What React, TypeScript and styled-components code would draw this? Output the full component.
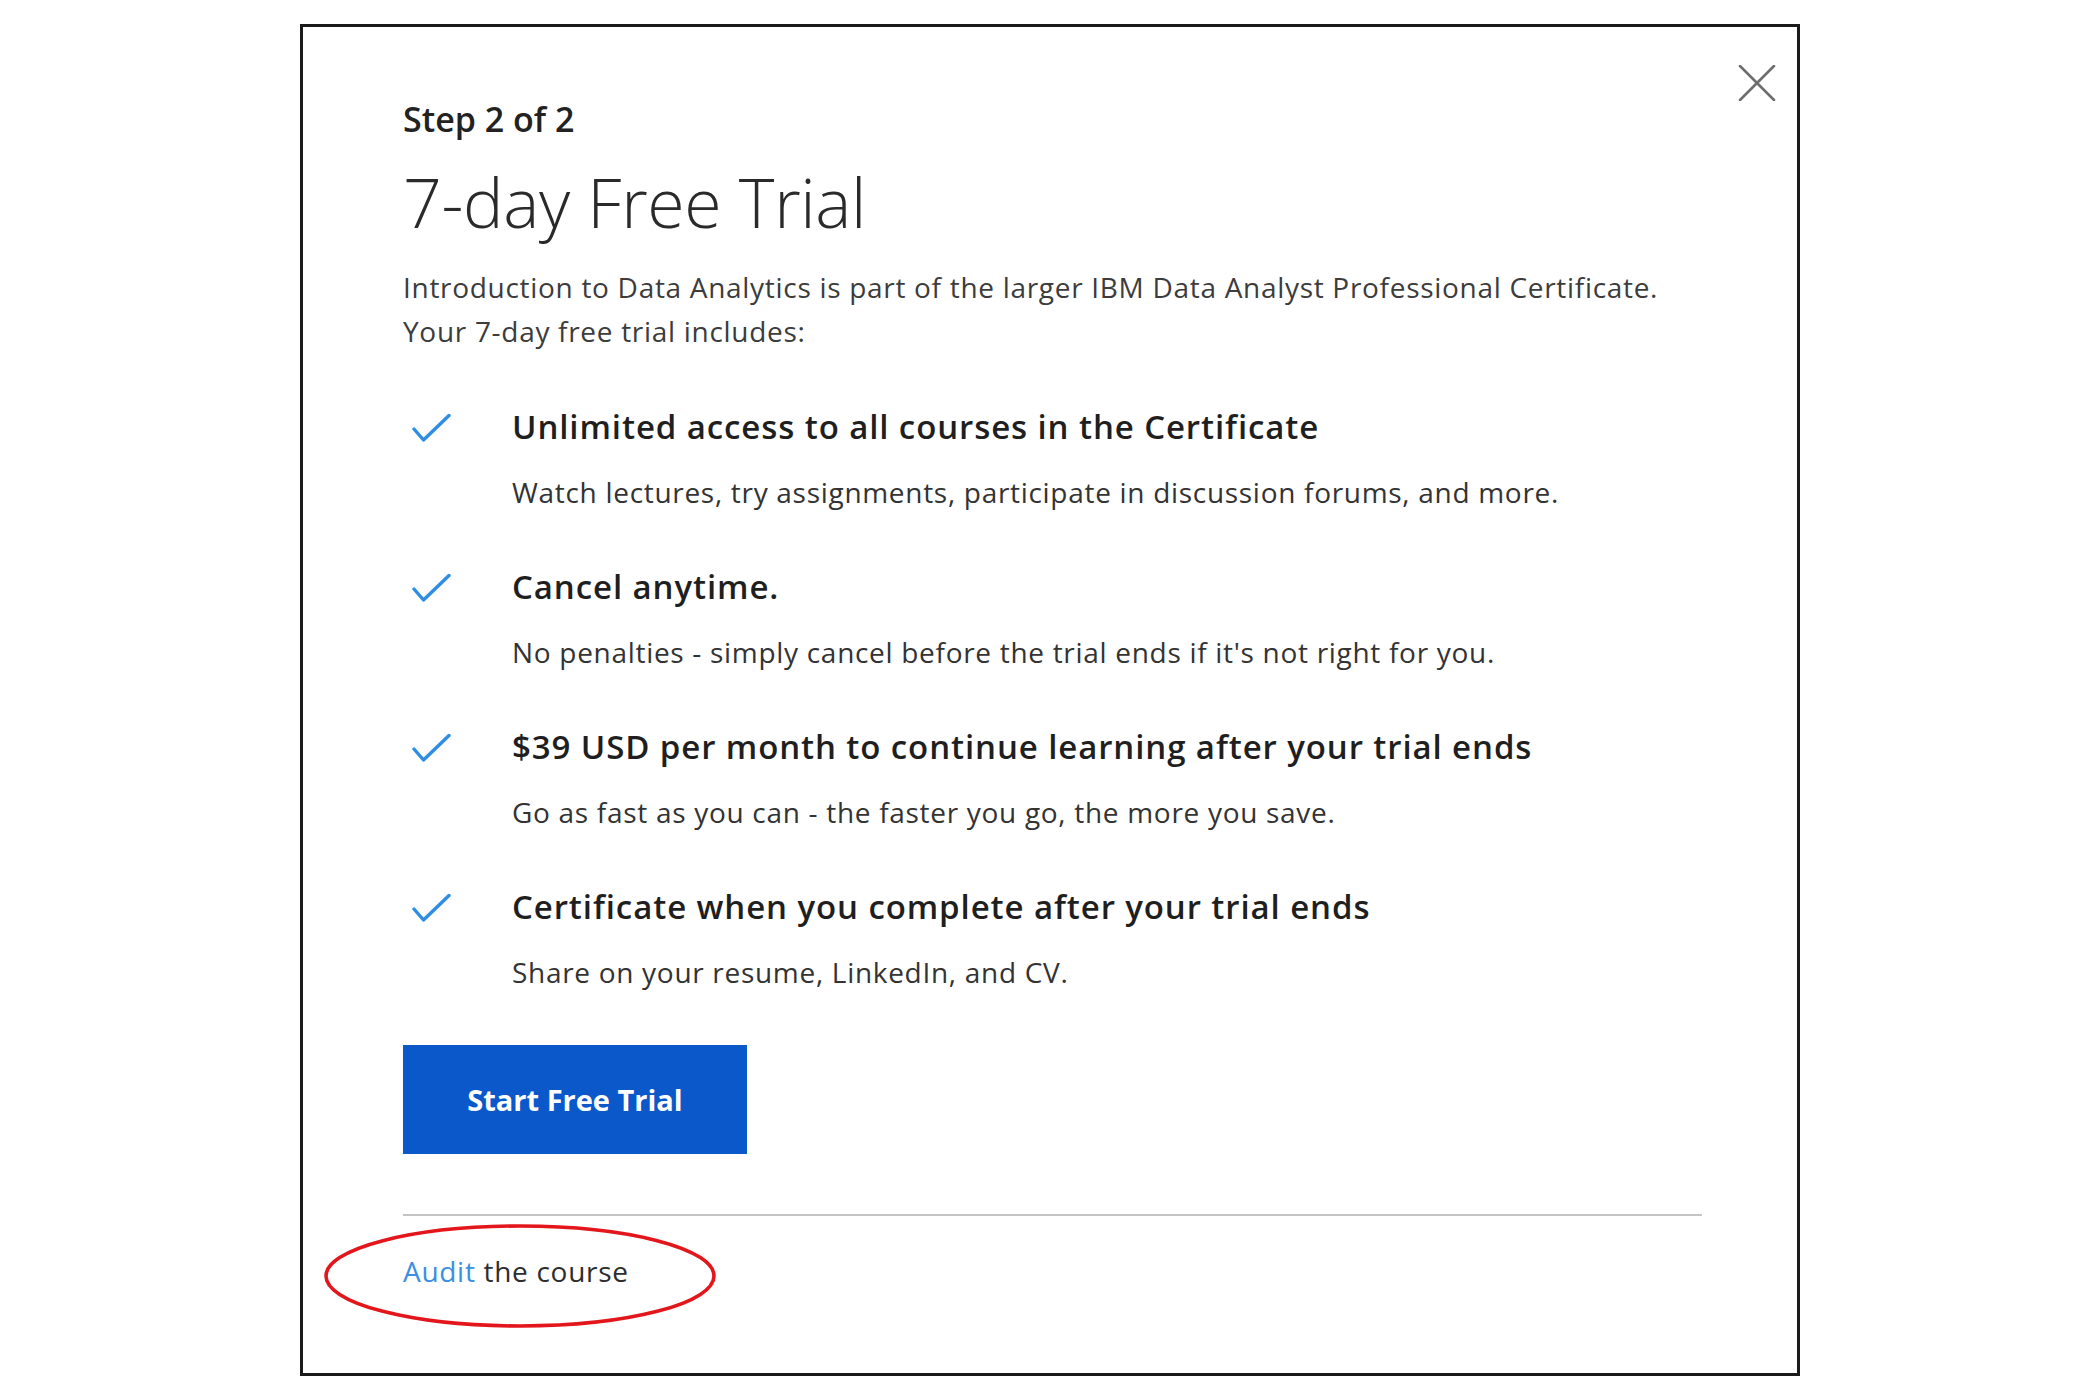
import styled, { createGlobalStyle } from "styled-components";

const GlobalStyle = createGlobalStyle`
	html, body {
		margin: 0;
		padding: 0;
		background: #ffffff;
	}
	body {
		font-family: "Open Sans", "Liberation Sans", sans-serif;
		color: #1f1f1f;
	}
	* {
		box-sizing: border-box;
	}
`;

const features = [
	{
		title: "Unlimited access to all courses in the Certificate",
		text: "Watch lectures, try assignments, participate in discussion forums, and more.",
	},
	{
		title: "Cancel anytime.",
		text: "No penalties - simply cancel before the trial ends if it's not right for you.",
	},
	{
		title: "$39 USD per month to continue learning after your trial ends",
		text: "Go as fast as you can - the faster you go, the more you save.",
	},
	{
		title: "Certificate when you complete after your trial ends",
		text: "Share on your resume, LinkedIn, and CV.",
	},
];

function CheckIcon() {
	return (
		<CheckSvg viewBox="0 0 40 30" width="40" height="30">
			<path d="M3 16 L12.5 27 L38 2.5" fill="none" stroke="#2f8de6" strokeWidth="3.4" strokeLinecap="round" strokeLinejoin="round" />
		</CheckSvg>
	);
}

export default function App() {
	return (
		<>
			<GlobalStyle />
			<Page>
				<Modal>
					<CloseButton aria-label="Close">
						<svg viewBox="0 0 38 36" width="38" height="36">
							<path d="M2 1 L36 35 M36 1 L2 35" stroke="#6e6e6e" strokeWidth="2.6" strokeLinecap="round" />
						</svg>
					</CloseButton>
					<Step>Step 2 of 2</Step>
					<Title>7-day Free Trial</Title>
					<Intro>
						Introduction to Data Analytics is part of the larger IBM Data Analyst Professional Certificate.
						<br />
						Your 7-day free trial includes:
					</Intro>
					<FeatureList>
						{features.map((f) => (
							<Feature key={f.title}>
								<IconCell>
									<CheckIcon />
								</IconCell>
								<div>
									<FeatureTitle>{f.title}</FeatureTitle>
									<FeatureText>{f.text}</FeatureText>
								</div>
							</Feature>
						))}
					</FeatureList>
					<StartButton>Start Free Trial</StartButton>
					<Divider />
					<AuditRow>
						<AuditLink href="###">Audit</AuditLink> the course
						<Circle viewBox="0 0 394 106" width="394" height="106">
							<ellipse cx="197" cy="53" rx="194" ry="50" fill="none" stroke="#e3161b" strokeWidth="3.6" />
						</Circle>
					</AuditRow>
				</Modal>
			</Page>
		</>
	);
}

const Page = styled.div`
	width: 2100px;
	height: 1400px;
	display: flex;
	justify-content: center;
	align-items: flex-start;
	padding-top: 24px;
`;

const Modal = styled.section`
	position: relative;
	width: 1500px;
	height: 1352px;
	border: 3px solid #1b1b1b;
	background: #ffffff;
	padding: 0 98px 0 100px;
	display: flex;
	flex-direction: column;
	align-items: flex-start;
`;

const CloseButton = styled.button`
	position: absolute;
	top: 38px;
	right: 21px;
	border: none;
	background: transparent;
	padding: 0;
	display: flex;
	cursor: pointer;
`;

const Step = styled.div`
	margin-top: 70px;
	font-size: 34px;
	line-height: 44px;
	font-weight: 600;
	color: #222;
`;

const Title = styled.h1`
	margin: 21px 0 0;
	font-size: 68px;
	line-height: 80px;
	font-weight: 300;
	color: #2a2a2a;
	letter-spacing: -0.3px;
`;

const Intro = styled.p`
	margin: 23px 0 0;
	font-size: 28px;
	line-height: 44px;
	font-weight: 400;
	letter-spacing: 0.7px;
	color: #3c3c3c;
`;

const FeatureList = styled.ul`
	list-style: none;
	margin: 54px 0 0;
	padding: 0;
	display: flex;
	flex-direction: column;
	gap: 55px;
`;

const Feature = styled.li`
	display: flex;
	align-items: flex-start;
`;

const IconCell = styled.div`
	width: 109px;
	flex: none;
	padding: 6px 0 0 8px;
`;

const CheckSvg = styled.svg`
	display: block;
`;

const FeatureTitle = styled.div`
	font-size: 33px;
	line-height: 40px;
	font-weight: 600;
	letter-spacing: 0.9px;
	color: #1f1f1f;
`;

const FeatureText = styled.div`
	margin-top: 25px;
	font-size: 28px;
	line-height: 40px;
	font-weight: 400;
	letter-spacing: 0.7px;
	color: #333;
`;

const StartButton = styled.button`
	margin-top: 53px;
	width: 344px;
	height: 109px;
	border: none;
	background: #0a58ca;
	color: #ffffff;
	font-family: "Open Sans", "Liberation Sans", sans-serif;
	font-size: 29px;
	font-weight: 700;
	cursor: pointer;
`;

const Divider = styled.hr`
	margin: 60px 0 0;
	width: 1299px;
	border: none;
	border-top: 2px solid #c4c4c4;
`;

const AuditRow = styled.div`
	position: relative;
	margin-top: 35px;
	font-size: 28px;
	line-height: 40px;
	letter-spacing: 0.7px;
	color: #2d2d2d;
`;

const AuditLink = styled.a`
	color: #3b8fe0;
	text-decoration: none;
`;

const Circle = styled.svg`
	position: absolute;
	left: -80px;
	top: -28px;
	pointer-events: none;
`;
